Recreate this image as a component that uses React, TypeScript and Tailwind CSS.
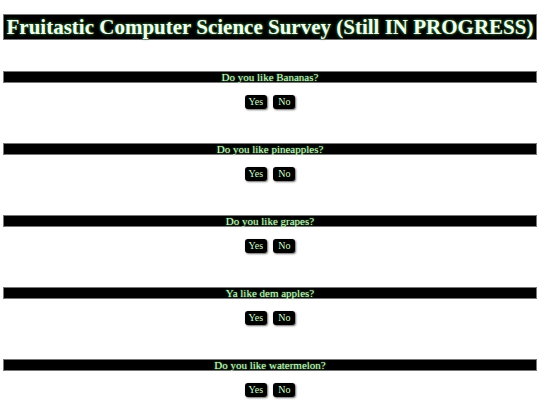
const questions = [
  'Do you like Bananas?',
  'Do you like pineapples?',
  'Do you like grapes?',
  'Ya like dem apples?',
  'Do you like watermelon?',
]

function Question({ text }: { text: string }) {
  return (
    <div>
      <div className="mx-[3px] h-[12px] bg-black border border-[#777] text-center text-[11px] leading-[10px] text-[#d0ffc8] [text-shadow:0_0_2px_#4caf50]">
        {text}
      </div>
      <div className="flex justify-center gap-[6px] mt-[12px]">
        <button className="h-[14px] px-[4px] bg-black rounded-[3px] text-[10px] leading-[14px] text-[#d0ffc8] shadow-[1px_1px_2px_#666] [font-family:'Liberation_Serif',serif]">
          Yes
        </button>
        <button className="h-[14px] px-[5px] bg-black rounded-[3px] text-[10px] leading-[14px] text-[#d0ffc8] shadow-[1px_1px_2px_#666] [font-family:'Liberation_Serif',serif]">
          No
        </button>
      </div>
    </div>
  )
}

export default function App() {
  return (
    <div className="w-[540px] h-[405px] overflow-hidden bg-white [font-family:'Liberation_Serif',serif] pt-[14px]">
      <h1 className="mx-[3px] h-[26px] bg-black border border-[#777] text-center font-bold text-[21px] leading-[24px] text-[#f0fff0] [text-shadow:0_0_3px_#4caf50] whitespace-nowrap">
        Fruitastic Computer Science Survey (Still IN PROGRESS)
      </h1>
      <div className="flex flex-col gap-[34px] mt-[31px]">
        {questions.map(q => (
          <Question key={q} text={q} />
        ))}
      </div>
    </div>
  )
}
